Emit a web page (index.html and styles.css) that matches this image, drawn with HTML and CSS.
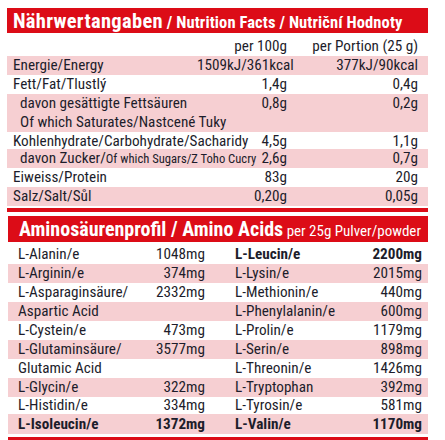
FILE: index.html
```html
<!DOCTYPE html>
<html lang="de">
<head>
<meta charset="utf-8">
<link rel="stylesheet" href="styles.css">
</head>
<body>
<div class="page">
  <section class="nutri">
    <div class="title"><span class="big">Nährwertangaben</span><span class="sub"> / Nutrition Facts / Nutriční Hodnoty</span></div>
    <div class="row head"><span class="lbl"></span><span class="v">per 100g</span><span class="v">per Portion (25 g)</span></div>
    <div class="row pink"><span class="lbl">Energie/Energy</span><span class="v">1509kJ/361kcal</span><span class="v">377kJ/90kcal</span></div>
    <div class="row"><span class="lbl">Fett/Fat/Tlustlý</span><span class="v">1,4g</span><span class="v">0,4g</span></div>
    <div class="row pink two"><span class="lbl ind">davon gesättigte Fettsäuren<br>Of which Saturates/Nastcené Tuky</span><span class="v">0,8g</span><span class="v">0,2g</span></div>
    <div class="row short"><span class="lbl">Kohlenhydrate/Carbohydrate/Sacharidy</span><span class="v">4,5g</span><span class="v">1,1g</span></div>
    <div class="row pink"><span class="lbl ind">davon Zucker/<small>Of which Sugars/Z Toho Cucry</small></span><span class="v">2,6g</span><span class="v">0,7g</span></div>
    <div class="row"><span class="lbl">Eiweiss/Protein</span><span class="v">83g</span><span class="v">20g</span></div>
    <div class="row pink"><span class="lbl">Salz/Salt/Sůl</span><span class="v">0,20g</span><span class="v">0,05g</span></div>
  </section>
  <div class="rule"></div>
  <section class="amino">
    <div class="title"><span class="big2">Aminosäurenprofil / Amino Acids</span><span class="sub2"> per 25g Pulver/powder</span></div>
    <div class="arow first"><div class="cell"><span>L-Alanin/e</span><span>1048mg</span></div><div class="cell b"><span>L-Leucin/e</span><span>2200mg</span></div></div>
    <div class="arow pink"><div class="cell"><span>L-Arginin/e</span><span>374mg</span></div><div class="cell"><span>L-Lysin/e</span><span>2015mg</span></div></div>
    <div class="arow"><div class="cell"><span>L-Asparaginsäure/</span><span>2332mg</span></div><div class="cell"><span>L-Methionin/e</span><span>440mg</span></div></div>
    <div class="arow pink"><div class="cell"><span>Aspartic Acid</span><span></span></div><div class="cell"><span>L-Phenylalanin/e</span><span>600mg</span></div></div>
    <div class="arow"><div class="cell"><span>L-Cystein/e</span><span>473mg</span></div><div class="cell"><span>L-Prolin/e</span><span>1179mg</span></div></div>
    <div class="arow pink"><div class="cell"><span>L-Glutaminsäure/</span><span>3577mg</span></div><div class="cell"><span>L-Serin/e</span><span>898mg</span></div></div>
    <div class="arow"><div class="cell"><span>Glutamic Acid</span><span></span></div><div class="cell"><span>L-Threonin/e</span><span>1426mg</span></div></div>
    <div class="arow pink"><div class="cell"><span>L-Glycin/e</span><span>322mg</span></div><div class="cell"><span>L-Tryptophan</span><span>392mg</span></div></div>
    <div class="arow short"><div class="cell"><span>L-Histidin/e</span><span>334mg</span></div><div class="cell"><span>L-Tyrosin/e</span><span>581mg</span></div></div>
    <div class="arow pink tall"><div class="cell b"><span>L-Isoleucin/e</span><span>1372mg</span></div><div class="cell b"><span>L-Valin/e</span><span>1170mg</span></div></div>
  </section>
  <div class="rule bottom"></div>
</div>
</body>
</html>
```

FILE: styles.css
```css
html, body {
  margin: 0;
  padding: 0;
  background: #ffffff;
}
body {
  font-family: "Roboto Condensed", "DejaVu Sans Condensed", sans-serif;
  color: #1d1d2b;
  font-size: 15.2px;
}
.page {
  padding: 8px 17px 0 7px;
  width: 421px;
}
.title {
  background: #dc0c17;
  color: #ffffff;
  font-weight: bold;
  white-space: nowrap;
  overflow: hidden;
}
.nutri .title {
  height: 25px;
  line-height: 26px;
  padding-left: 6px;
}
.big {
  font-size: 20.5px;
  letter-spacing: 0.3px;
}
.sub {
  font-size: 16.5px;
  letter-spacing: 0.1px;
}
.row {
  display: grid;
  grid-template-columns: minmax(0, 1fr) 90px 131px;
  padding: 0 10px 0 6px;
  height: 19px;
  line-height: 19px;
  white-space: nowrap;
}
.row.head {
  height: 23px;
  line-height: 27px;
}
.row.two {
  height: 38px;
}
.row.short {
  height: 17px;
  line-height: 18px;
}
.pink {
  background: #f6cfd2;
}
.lbl.ind {
  padding-left: 7px;
}
.lbl small {
  font-size: 12.6px;
}
.v {
  text-align: right;
}
.rule {
  height: 4px;
  background: #dc0c17;
  margin: 2px 0 4px;
}
.amino {
  margin-left: 1px;
}
.amino .title {
  height: 26px;
  line-height: 27px;
  padding-left: 11px;
}
.big2 {
  font-size: 20px;
}
.sub2 {
  font-weight: normal;
  font-size: 15px;
}
.arow {
  display: grid;
  grid-template-columns: 187px 187px;
  column-gap: 30px;
  padding: 0 6px 0 10px;
  height: 19px;
  line-height: 19px;
  white-space: nowrap;
}
.arow.first {
  height: 22px;
  line-height: 25px;
}
.arow.short {
  height: 17px;
  line-height: 17px;
}
.arow.tall {
  height: 20px;
  line-height: 20px;
}
.cell {
  display: flex;
  justify-content: space-between;
}
.cell.b {
  font-weight: bold;
}
.rule.bottom {
  margin: 3px 0 0 1px;
  height: 8px;
}
```
